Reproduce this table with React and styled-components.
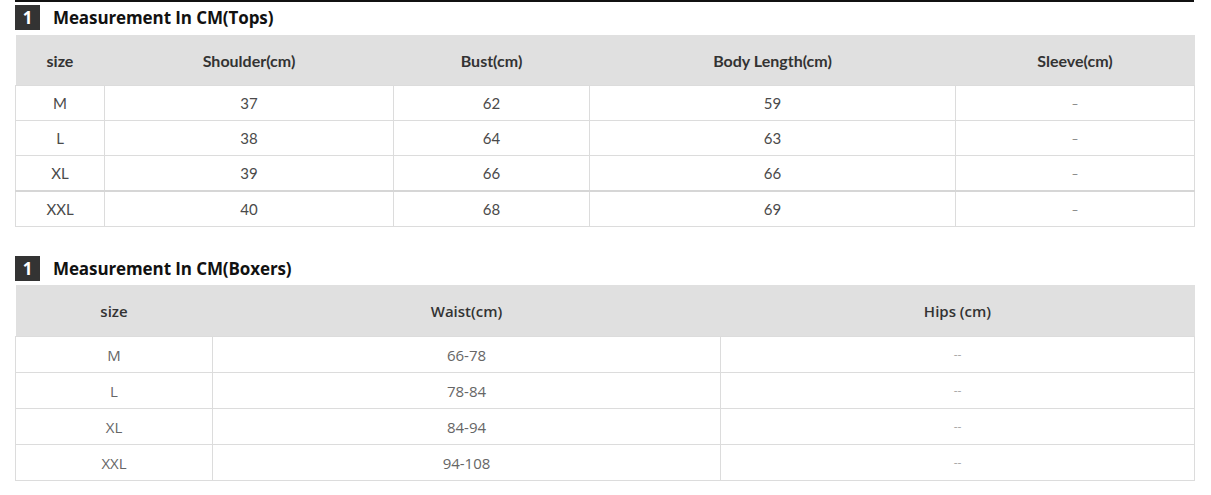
import React from 'react';
import styled, { createGlobalStyle } from 'styled-components';

const GlobalStyle = createGlobalStyle`
    body {
        margin: 0;
        background: #fff;
        font-family: "Open Sans", "Liberation Sans", sans-serif;
    }
`;

const Page = styled.div`
    width: 1179px;
    margin-left: 15px;
    border-top: 2px solid #111;
`;

const Section = styled.section``;

const TitleRow = styled.div`
    display: flex;
    align-items: center;
    gap: 13px;
    height: 25px;
    margin-top: ${(p) => p.top}px;
    margin-bottom: ${(p) => p.bottom}px;
`;

const Badge = styled.span`
    display: flex;
    align-items: center;
    justify-content: center;
    width: 25px;
    height: 25px;
    background: #333;
    color: #fff;
    font-family: "Open Sans", sans-serif;
    font-weight: 700;
    font-size: 17px;
`;

const Title = styled.h3`
    margin: 0;
    font-family: "Open Sans", sans-serif;
    font-weight: 700;
    font-size: 17px;
    color: #111;
    letter-spacing: -0.1px;
`;

const Table = styled.table`
    width: 100%;
    table-layout: fixed;
    border-collapse: collapse;
    font-family: ${(p) => (p.sans ? '"Open Sans", sans-serif' : 'Lato, "Open Sans", sans-serif')};
`;

const Th = styled.th`
    height: ${(p) => p.h}px;
    padding: 0;
    background: #e0e0e0;
    color: #333;
    font-weight: ${(p) => (p.sans ? 600 : 700)};
    font-size: ${(p) => (p.sans ? 15 : 16)}px;
    text-align: center;
`;

const Td = styled.td`
    height: ${(p) => p.h}px;
    padding: 0;
    border: 1px solid #dcdcdc;
    color: ${(p) => (p.muted ? '#777' : '#4a4a4a')};
    font-size: ${(p) => (p.muted ? 12 : 15)}px;
    text-align: center;
    ${(p) => p.thick && 'border-top: 2px solid #d6d6d6;'}
`;

const BoxerTd = styled(Td)`
    font-size: ${(p) => (p.muted ? 12 : 15)}px;
    color: ${(p) => (p.muted ? '#aaa' : '#666')};
`;

const tops = {
    cols: [89, 289, 196, 366, 239],
    head: ['size', 'Shoulder(cm)', 'Bust(cm)', 'Body Length(cm)', 'Sleeve(cm)'],
    rows: [
        ['M', '37', '62', '59', '–'],
        ['L', '38', '64', '63', '–'],
        ['XL', '39', '66', '66', '–'],
        ['XXL', '40', '68', '69', '–'],
    ],
};

const boxers = {
    cols: [197, 508, 474],
    head: ['size', 'Waist(cm)', 'Hips (cm)'],
    rows: [
        ['M', '66-78', '--'],
        ['L', '78-84', '--'],
        ['XL', '84-94', '--'],
        ['XXL', '94-108', '--'],
    ],
};

export default function App() {
    return (
        <Page>
            <GlobalStyle />
            <Section>
                <TitleRow top={3} bottom={5}>
                    <Badge>1</Badge>
                    <Title>Measurement In CM(Tops)</Title>
                </TitleRow>
                <Table>
                    <colgroup>
                        {tops.cols.map((w, i) => <col key={i} style={{ width: w }} />)}
                    </colgroup>
                    <thead>
                        <tr>
                            {tops.head.map((h) => <Th key={h} h={50}>{h}</Th>)}
                        </tr>
                    </thead>
                    <tbody>
                        {tops.rows.map((r, i) => (
                            <tr key={i}>
                                {r.map((c, j) => (
                                    <Td key={j} h={34} muted={c === '–'} thick={i === 3}>{c}</Td>
                                ))}
                            </tr>
                        ))}
                    </tbody>
                </Table>
            </Section>
            <Section>
                <TitleRow top={29} bottom={4}>
                    <Badge>1</Badge>
                    <Title>Measurement In CM(Boxers)</Title>
                </TitleRow>
                <Table sans>
                    <colgroup>
                        {boxers.cols.map((w, i) => <col key={i} style={{ width: w }} />)}
                    </colgroup>
                    <thead>
                        <tr>
                            {boxers.head.map((h) => <Th key={h} h={51} sans>{h}</Th>)}
                        </tr>
                    </thead>
                    <tbody>
                        {boxers.rows.map((r, i) => (
                            <tr key={i}>
                                {r.map((c, j) => (
                                    <BoxerTd key={j} h={35} muted={c === '--'}>{c}</BoxerTd>
                                ))}
                            </tr>
                        ))}
                    </tbody>
                </Table>
            </Section>
        </Page>
    );
}
